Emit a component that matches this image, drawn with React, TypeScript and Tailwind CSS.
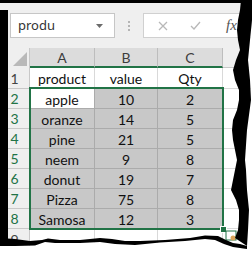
import React from "react";

const rows: [string, string, string][] = [
  ["apple", "10", "2"],
  ["oranze", "14", "5"],
  ["pine", "21", "5"],
  ["neem", "9", "8"],
  ["donut", "19", "7"],
  ["Pizza", "75", "8"],
  ["Samosa", "12", "3"],
];

function TornEdges() {
  const left =
    "241,0 240,10 238,20 237,30 238,40 240,50 236,60 233,70 235,80 239,90 239,100 237,110 233,120 232,130 233,140 235,150 237,160 235,170 233,180 231,190 236,200 239,210 239,220 238,230 235,238";
  const right =
    "247,246 248,230 249,210 247,190 246,170 245,160 247,130 251,100 250,80 248,60 250,40 252,20 252,0";
  const tearTop =
    "0,238 15,239 30,241 42,240 48,238.5 60,240 80,240 100,238 112,239 125,241 140,241 165,240 190,238 205,235.5 218,236 226,240 233,243 240,244 247,246";
  const tearBottom =
    "247,249 233,247 224,244 215,240 205,239 185,241 160,242.5 135,245 115,244 100,242 80,243 55,243 45,242 35,245.5 15,246 0,246";
  return (
    <svg
      className="absolute left-0 top-0 pointer-events-none"
      width="252"
      height="255"
      viewBox="0 0 252 255"
    >
      <rect x="226" y="231" width="10" height="9" fill="#fff" stroke="#217346" strokeWidth="1" />
      <circle cx="233" cy="238" r="2.5" fill="#d9a45a" />
      <polygon points={`${right} 252,0 252,255 247,255`} fill="#fff" />
      <polygon points={`${tearBottom} 0,255 252,255 252,249`} fill="#fff" />
      <polygon points={`${left} ${right}`} fill="#000" />
      <polygon points={`${tearTop} ${tearBottom}`} fill="#000" />
      <rect x="0" y="0" width="252" height="3" fill="#000" />
      <rect x="0" y="10" width="8" height="236" fill="#000" />
    </svg>
  );
}

export default function App() {
  return (
    <div className="relative w-[252px] h-[255px] overflow-hidden bg-white font-[Lato]">
      {/* toolbar */}
      <div className="h-[48px] bg-[#efefef] flex items-start pt-[13px] pl-[10px]">
        <div className="w-[105px] h-[25px] bg-white border border-[#c6c6c6] flex items-center justify-between pl-[7px] pr-[11px]">
          <span className="text-[13px] leading-none text-[#333] font-['Noto_Sans']">produ</span>
          <svg width="7" height="4" viewBox="0 0 7 4">
            <path d="M0 0h7L3.5 4z" fill="#6b6b6b" />
          </svg>
        </div>
        <div className="w-[28px] h-[25px] flex flex-col items-center justify-center gap-[2px]">
          <div className="w-[2px] h-[2px] bg-[#b5b5b5]" />
          <div className="w-[2px] h-[2px] bg-[#b5b5b5]" />
          <div className="w-[2px] h-[2px] bg-[#b5b5b5]" />
        </div>
        <div className="flex-1 h-[25px] bg-white border border-[#d0d0d0] flex items-center pl-[14px]">
          <svg width="10" height="10" viewBox="0 0 10 10">
            <path d="M1 1L9 9M9 1L1 9" stroke="#b8b8b8" strokeWidth="1.3" />
          </svg>
          <svg className="ml-[22px]" width="11" height="9" viewBox="0 0 11 9">
            <path d="M1 5L4 8L10 1" stroke="#b8b8b8" strokeWidth="1.3" fill="none" />
          </svg>
          <span className="ml-[25px] text-[15px] italic text-[#555] font-['Liberation_Serif']">fx</span>
        </div>
      </div>

      {/* grid */}
      <div className="grid grid-cols-[30px_65px_63px_65px_1fr] text-[14px] text-[#111]">
        <div className="h-[20px] bg-[#efefef] border-r border-[#c8c8c8] relative">
          <svg className="absolute right-[2px] bottom-[2px]" width="14" height="14" viewBox="0 0 14 14">
            <path d="M14 0V14H0z" fill="#b9b9b9" />
          </svg>
        </div>
        {["A", "B", "C"].map((c) => (
          <div
            key={c}
            className="h-[20px] bg-[#dcdcdc] border-r border-[#bdbdbd] border-b-2 border-b-[#217346] flex items-center justify-center text-[#3d3d3d]"
          >
            {c}
          </div>
        ))}
        <div className="h-[20px] bg-[#efefef] border-b border-[#c8c8c8]" />

        <div className="h-[21px] bg-[#efefef] border-r border-b border-[#c8c8c8] flex items-center justify-center text-[#444]">
          1
        </div>
        {["product", "value", "Qty"].map((t) => (
          <div
            key={t}
            className="h-[21px] bg-white border-r border-b border-[#d9d9d9] flex items-center justify-center pt-[1px]"
          >
            {t}
          </div>
        ))}
        <div className="h-[21px] border-b border-[#d9d9d9]" />

        {rows.map((r, i) => (
          <React.Fragment key={i}>
            <div className="h-[20px] bg-[#efefef] border-r border-b border-[#c8c8c8] flex items-center justify-center text-[#217346]">
              {i + 2}
            </div>
            {r.map((t, j) => (
              <div
                key={j}
                className={
                  i === 0 && j === 0
                    ? "h-[20px] bg-white border-r border-b border-[#ababab] flex items-center justify-center pt-[2px]"
                    : "h-[20px] bg-[#c8c8c8] border-r border-b border-[#ababab] flex items-center justify-center pt-[2px]"
                }
              >
                {t}
              </div>
            ))}
            <div className="h-[20px] border-b border-[#d9d9d9]" />
          </React.Fragment>
        ))}

        <div className="h-[20px] bg-[#efefef] border-r border-b border-[#c8c8c8] flex items-center justify-center text-[#444] pt-[2px]">
          9
        </div>
        <div className="h-[20px] border-r border-b border-[#d9d9d9]" />
        <div className="h-[20px] border-r border-b border-[#d9d9d9]" />
        <div className="h-[20px] border-r border-b border-[#d9d9d9]" />
        <div className="h-[20px] border-b border-[#d9d9d9]" />
      </div>

      <div className="absolute left-[29px] top-[87px] w-[195px] h-[143px] border-2 border-[#217346]" />
      <div className="absolute left-[220px] top-[226px] w-[7px] h-[7px] bg-[#217346] border border-white" />

      <TornEdges />
    </div>
  );
}
